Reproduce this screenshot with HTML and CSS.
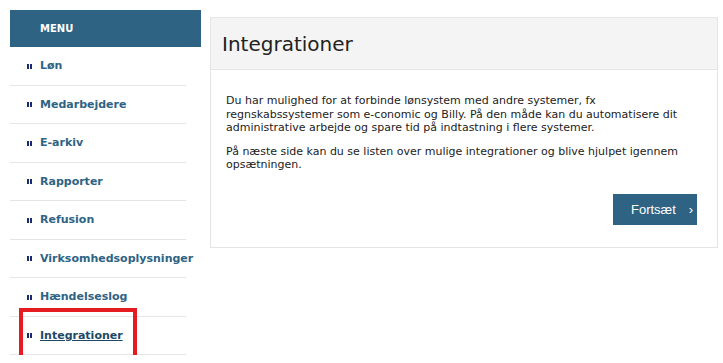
FILE: index.html
```html
<!DOCTYPE html>
<html lang="da">
<head>
<meta charset="utf-8">
<title>Integrationer</title>
<link rel="stylesheet" href="styles.css">
</head>
<body>
<div class="page">
  <nav class="sidebar">
    <div class="menu-head">MENU</div>
    <ul class="menu">
      <li class="menu-item"><span class="bullet"></span><a href="#">Løn</a></li>
      <li class="menu-item"><span class="bullet"></span><a href="#">Medarbejdere</a></li>
      <li class="menu-item"><span class="bullet"></span><a href="#">E-arkiv</a></li>
      <li class="menu-item"><span class="bullet"></span><a href="#">Rapporter</a></li>
      <li class="menu-item"><span class="bullet"></span><a href="#">Refusion</a></li>
      <li class="menu-item"><span class="bullet"></span><a href="#">Virksomhedsoplysninger</a></li>
      <li class="menu-item"><span class="bullet"></span><a href="#">Hændelseslog</a></li>
      <li class="menu-item active"><span class="bullet"></span><a href="#">Integrationer</a><span class="highlight"></span></li>
    </ul>
  </nav>
  <main class="panel">
    <div class="panel-head"><h1 class="title">Integrationer</h1></div>
    <div class="panel-body">
      <p class="text">Du har mulighed for at forbinde lønsystem med andre systemer, fx regnskabssystemer som e-conomic og Billy. På den måde kan du automatisere dit administrative arbejde og spare tid på indtastning i flere systemer.</p>
      <p class="text">På næste side kan du se listen over mulige integrationer og blive hjulpet igennem opsætningen.</p>
      <div class="actions">
        <button class="btn" type="button"><span class="btn-label">Fortsæt</span><span class="chev">›</span></button>
      </div>
    </div>
  </main>
</div>
</body>
</html>
```
FILE: styles.css
```css
html, body {
  margin: 0;
  padding: 0;
  background: #ffffff;
}
body {
  font-family: "DejaVu Sans", Verdana, sans-serif;
  color: #222222;
}
.page {
  display: flex;
  align-items: flex-start;
  padding: 10px 0 0 10px;
}
.sidebar {
  width: 191px;
  flex: none;
}
.menu-head {
  height: 37px;
  background: #2e6384;
  color: #ffffff;
  font-weight: bold;
  font-size: 10px;
  line-height: 38px;
  padding-left: 30px;
  box-sizing: border-box;
}
.menu {
  list-style: none;
  margin: 0;
  padding: 0;
  width: 176px;
}
.menu-item {
  position: relative;
  display: flex;
  align-items: center;
  height: 37.5px;
  border-bottom: 1px solid #e5e5e5;
  padding-left: 17px;
  white-space: nowrap;
}
.menu-item a {
  flex: none;
  color: #2e6384;
  font-weight: bold;
  font-size: 11px;
  text-decoration: none;
}
.menu-item.active a {
  color: #1e4866;
  text-decoration: underline;
}
.bullet {
  flex: none;
  display: inline-block;
  width: 2px;
  height: 5px;
  background: #1b2a6b;
  box-shadow: 3px 0 0 #1b2a6b;
  margin-right: 11px;
  margin-top: 1px;
}
.highlight {
  position: absolute;
  left: 9px;
  top: -9px;
  width: 118px;
  height: 52px;
  border: 4px solid #e41c22;
  box-sizing: border-box;
  pointer-events: none;
}
.panel {
  width: 508px;
  margin: 7px 0 0 9px;
  border: 1px solid #e5e5e5;
  box-sizing: border-box;
}
.panel-head {
  background: #f4f4f4;
  border-bottom: 1px solid #e5e5e5;
  height: 52px;
  box-sizing: border-box;
  display: flex;
  align-items: center;
  padding-left: 11px;
}
.title {
  margin: 0;
  font-weight: normal;
  font-size: 20px;
  color: #222222;
}
.panel-body {
  padding: 24px 20px 22px 15px;
}
.text {
  margin: 0 0 10px 0;
  font-size: 11px;
  line-height: 13.5px;
  color: #222222;
}
.actions {
  display: flex;
  justify-content: flex-end;
  margin-top: 22px;
}
.btn {
  width: 84px;
  height: 31px;
  border: none;
  background: #2e6384;
  color: #ffffff;
  font-family: "Liberation Sans", Arial, sans-serif;
  font-size: 13px;
  display: flex;
  align-items: center;
  padding: 0 0 0 18px;
  cursor: pointer;
}
.chev {
  margin-left: 13px;
  font-size: 13px;
}
```
